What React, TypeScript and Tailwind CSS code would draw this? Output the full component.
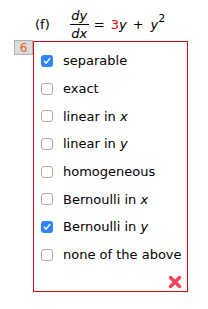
import React from "react";

const items: { label: string; v?: string; checked: boolean }[] = [
  { label: "separable", checked: true },
  { label: "exact", checked: false },
  { label: "linear in ", v: "x", checked: false },
  { label: "linear in ", v: "y", checked: false },
  { label: "homogeneous", checked: false },
  { label: "Bernoulli in ", v: "x", checked: false },
  { label: "Bernoulli in ", v: "y", checked: true },
  { label: "none of the above", checked: false },
];

function Box({ checked }: { checked: boolean }) {
  if (checked) {
    return (
      <div className="w-[12px] h-[12px] rounded-[3px] bg-[#2f83f6] flex items-center justify-center shrink-0">
        <svg width="8" height="8" viewBox="0 0 8 8">
          <path d="M1.3 4.3 L3.2 6.1 L6.7 1.6" stroke="white" strokeWidth="1.5" fill="none" strokeLinecap="round" strokeLinejoin="round" />
        </svg>
      </div>
    );
  }
  return <div className="w-[12px] h-[12px] rounded-[3px] border border-[#a9a9a9] bg-white shrink-0" />;
}

export default function App() {
  return (
    <div className="w-[208px] h-[309px] bg-white text-black font-['DejaVu_Sans',Verdana,sans-serif] text-[13px] leading-none">
      <div className="flex items-center pl-[35px] pt-[8px] h-[41px]">
        <span className="text-[13px]">(f)</span>
        <div className="flex flex-col items-center ml-[20px] w-[19px]">
          <span className="italic text-[13px] leading-[14px]">dy</span>
          <div className="w-[19px] h-px bg-black mt-[1px] mb-[2px]" />
          <span className="italic text-[13px] leading-[14px]">dx</span>
        </div>
        <span className="ml-[5px] text-[13px]">=</span>
        <span className="ml-[6px] text-[13px] text-[#ee0000]">3</span>
        <span className="italic text-[13px]">y</span>
        <span className="ml-[6px] text-[13px]">+</span>
        <span className="ml-[7px] italic text-[13px]">y</span>
        <span className="text-[11px] relative -top-[6px]">2</span>
      </div>
      <div className="flex items-start pl-[14px]">
        <div className="w-[19px] h-[15px] mt-[-1px] bg-[#dcdcdc] border border-[#b0b0b0] text-[#e8601c] text-[12px] flex items-center justify-center">
          6
        </div>
        <div className="w-[155px] h-[251px] border border-[#dd0a0a] pl-[7px] pt-[5px] flex flex-col">
          {items.map((it, i) => (
            <div key={i} className="h-[27.7px] flex items-center">
              <Box checked={it.checked} />
              <span className="ml-[10px] whitespace-nowrap">
                {it.label}
                {it.v && <i>{it.v}</i>}
              </span>
            </div>
          ))}
          <div className="flex justify-end pr-[5px] mt-[6px]">
            <svg width="14" height="14" viewBox="0 0 14 14">
              <path d="M2.5 2.5 L11.5 11.5 M11.5 2.5 L2.5 11.5" stroke="#f2425a" strokeWidth="3.4" strokeLinecap="round" />
            </svg>
          </div>
        </div>
      </div>
    </div>
  );
}
